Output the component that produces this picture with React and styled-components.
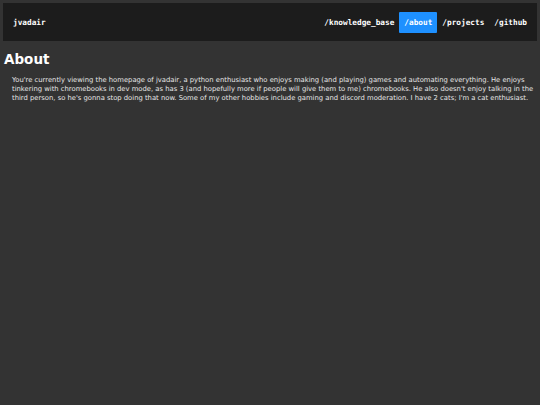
import React from "react";
import styled, { createGlobalStyle } from "styled-components";

const GlobalStyle = createGlobalStyle`
  html, body {
    margin: 0;
    background: #333333;
    color: #eeeeee;
    font-family: "DejaVu Sans", Verdana, sans-serif;
  }
  body {
    padding: 3px;
  }
`;

const links = [
  { label: "/knowledge_base" },
  { label: "/about", active: true },
  { label: "/projects" },
  { label: "/github" },
];

const App = () => {
  return (
    <>
      <GlobalStyle />
      <NavBar>
        <Brand>jvadair</Brand>
        <NavLinks>
          {links.map(link => (
            <NavLink key={link.label} $active={link.active}>
              {link.label}
            </NavLink>
          ))}
        </NavLinks>
      </NavBar>
      <Title>About</Title>
      <Body>
        You're currently viewing the homepage of jvadair, a python enthusiast
        who enjoys making (and playing) games and automating everything. He
        enjoys tinkering with chromebooks in dev mode, as has 3 (and hopefully
        more if people will give them to me) chromebooks. He also doesn't enjoy
        talking in the third person, so he's gonna stop doing that now. Some of
        my other hobbies include gaming and discord moderation. I have 2 cats;
        I'm a cat enthusiast.
      </Body>
    </>
  );
};

export default App;

/* ---------------------------- Styled Components --------------------------- */

const NavBar = styled.nav`
  height: 38px;
  box-sizing: border-box;
  background: #1c1c1c;
  display: flex;
  align-items: center;
  justify-content: space-between;
  padding: 0 5px 0 10px;
  font-family: "DejaVu Sans Mono", monospace;
  font-weight: bold;
  font-size: 7.75px;
  color: #ffffff;
`;

const Brand = styled.span`
  padding: 0;
`;

const NavLinks = styled.div`
  display: flex;
  align-items: center;
`;

const NavLink = styled.a`
  display: flex;
  align-items: center;
  height: 21px;
  padding: 0 5px;
  border-radius: 1px;
  color: #ffffff;
  background: ${p => (p.$active ? "#1e90ff" : "transparent")};
  cursor: pointer;
`;

const Title = styled.h1`
  margin: 10px 0 9px 1px;
  font-size: 13.5px;
  font-weight: bold;
  color: #ffffff;
`;

const Body = styled.p`
  margin: 0 0 0 9px;
  font-size: 6.8px;
  line-height: 9px;
  color: #e6e6e6;
`;
